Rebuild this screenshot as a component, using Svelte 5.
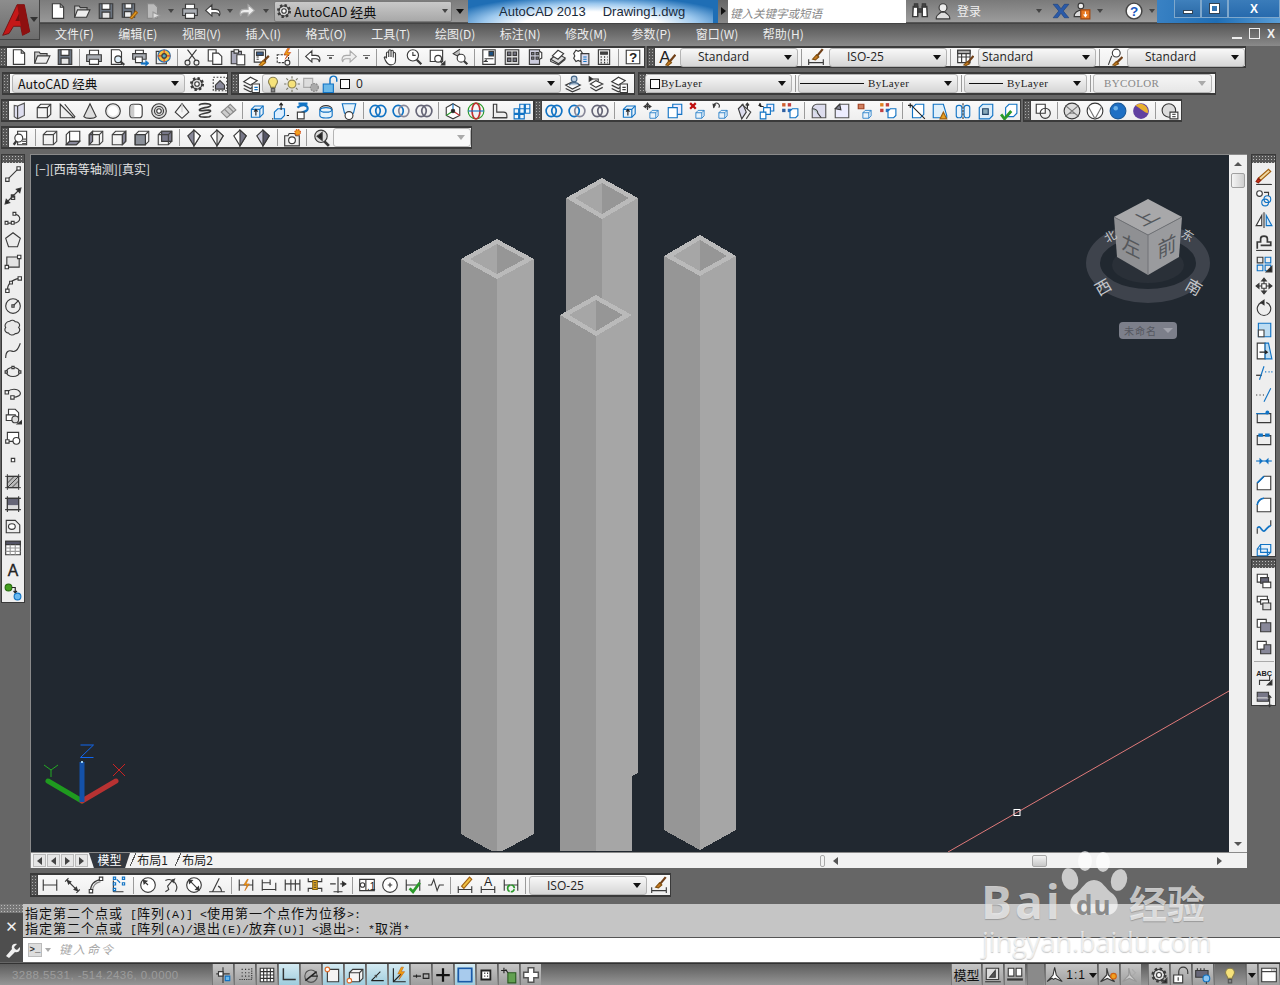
<script lang="ts">
	const B = '#1173c4';
	const cube = (c = B) =>
		`<path d="M3 6.5l3-3h7.5v7l-3 3h-7.5z" fill="#eaf3fa" stroke="${c}"/><path d="M3 6.5h7.5v7M10.5 6.5l3-3" stroke="${c}"/>`;
	const dcube = (x = '') => `<g transform="translate(4 5) scale(.7)">${cube()}</g>${x}`;
	const rings = (a = B, b = B) =>
		`<ellipse cx="5.5" cy="8" rx="4.5" ry="5" stroke="${a}" stroke-width="1.5"/><ellipse cx="10.5" cy="8" rx="4.5" ry="5" stroke="${b}" stroke-width="1.5"/>`;
	const wire = (f = 'none') =>
		`<path d="M2 5l3-3h9v9l-3 3H2z" fill="${f}" stroke="#444"/><path d="M2 5h9v9M11 5l3-3" stroke="#444"/>`;
	const diamond = (l = '#fff', r = '#fff') =>
		`<path d="M8 1l5.5 5-5.5 9-5.5-9z" fill="${l}"/><path d="M8 1v14l5.5-9z" fill="${r}"/>`;
	const dim = (x = '') => `<path d="M2 3v10M14 3v10M2 8h12" />${x}`;

	const icons: Record<string, string> = {
		new: `<path d="M3 1.5h7l3 3v10H3z" fill="#fff"/><path d="M10 1.5v3h3"/>`,
		open: `<path d="M1.5 13.5v-10h4l1 1.5h6v2" fill="#ccc"/><path d="M1.5 13.5l2.5-6.5h11l-3 6.5z" fill="#eee"/>`,
		save: `<path d="M2 1.5h12v13H2z" fill="#6b7480"/><path d="M4.5 1.5h7v5h-7z" fill="#fff"/><path d="M4.5 9h7v5.5h-7z" fill="#e6e6e6"/>`,
		saveas: `<path d="M2 1.5h11v12H2z" fill="#6b7480"/><path d="M4.5 1.5h6v4h-6z" fill="#fff"/><path d="M4 8.5h6v5H4z" fill="#eee"/><path d="M9 14l5-6 1.5 1.5-5 5.5z" fill="#e8a020" stroke="#a06010"/>`,
		publish: `<path d="M3 1.5h6l3 3v10H3z" fill="#bbb" stroke="#888"/><path d="M8 9l6 3-6 3z" fill="#ddd" stroke="#999"/>`,
		print: `<path d="M4 6V2h8v4" fill="#fff"/><path d="M1.5 6h13v6h-13z" fill="#a9adb3"/><path d="M4 10h8v4.5H4z" fill="#fff"/>`,
		preview: `<path d="M3 1.5h7l2 2v11H3z" fill="#fff"/><circle cx="9" cy="10" r="3" fill="#dfeffa"/><path d="M11 12l3.5 3" stroke-width="2"/>`,
		plot: `<path d="M4 5V2h7v3" fill="#fff"/><path d="M1.5 5h12v5h-12z" fill="#a9adb3"/><path d="M4 8h6v5H4z" fill="#fff"/><path d="M9 13h4V11l3 2.5L13 16v-1.5H9z" fill="${B}" stroke="${B}" stroke-width=".5"/>`,
		view3d: `<path d="M2 3h9v11H2z" fill="#eee"/><circle cx="9" cy="7" r="5.5" fill="#f2c040" stroke="#2a70b0"/><path d="M9 1.5v11M3.5 7h11" stroke="#d04030"/><circle cx="9" cy="7" r="2" fill="#5ab"/>`,
		cut: `<path d="M4 1.5l7 9M12 1.5l-7 9"/><circle cx="4" cy="13" r="2.2"/><circle cx="12" cy="13" r="2.2"/>`,
		copy: `<path d="M2 1.5h7v10H2z" fill="#fff"/><path d="M6 4.5h5l3 3v7H6z" fill="#fff"/>`,
		paste: `<path d="M2 3h9v11H2z" fill="#aab"/><path d="M4.5 1.5h4v3h-4z" fill="#eee"/><path d="M7 6h7v9H7z" fill="#fff"/>`,
		match: `<path d="M2 1.5h10v11H2z" fill="#fff"/><path d="M4 3.5h6v3H4z" fill="#3a5f90"/><path d="M4 8h2M4 10h2"/><path d="M15 7l-5 5" stroke="#704018" stroke-width="2"/><path d="M10 11l2 2-3 2.5-2.5-.5z" fill="#e8a020" stroke="#a06010"/>`,
		block: `<path d="M2 6h10v7H2z" fill="#fff" stroke-dasharray="2 1"/><path d="M11 .5L8 6h3l-2 4 5-6h-3l2-3.5z" fill="#f0a010" stroke="#c03010" stroke-width=".5"/><circle cx="11" cy="13" r="2.2" fill="#fff"/>`,
		undo: `<path d="M7 2.5L1.5 7.5 7 12.5V9.5h3.5c2 0 3 1.2 3 3 1.5-3 .5-6-3-6H7z" fill="#fff"/>`,
		redo: `<path d="M9 2.5l5.5 5L9 12.5V9.5H5.5c-2 0-3 1.2-3 3-1.5-3-.5-6 3-6H9z" fill="#eee" stroke="#aaa"/>`,
		pan: `<path d="M4 9V4.5a1 1 0 0 1 2 0V8V2.5a1 1 0 0 1 2 0V8V3a1 1 0 0 1 2 0v5.5V5a1 1 0 0 1 2 0v6c0 2.5-2 4-4 4-2.5 0-3.5-1-5-4L2 8.5c.5-1 1.5-.5 2 .5z" fill="#fff"/>`,
		zoom: `<circle cx="7" cy="6.5" r="5" fill="#fff"/><path d="M7 3.5v3h2.5"/><path d="M10.5 10.5l4 4" stroke-width="2"/>`,
		zoomw: `<path d="M2 2h11v10H2z" fill="#fff"/><circle cx="9" cy="9.5" r="3" fill="#fff"/><path d="M11 12l2 2"/><path d="M12 15h3v-3z" fill="#222"/>`,
		zoomp: `<path d="M8 1L2 5l3.5 2 2.5-2" fill="#bbb"/><circle cx="9" cy="9" r="3.5" fill="#fff"/><path d="M11.5 11.5l3 3" stroke-width="2"/>`,
		prop: `<path d="M2.5 1.5h11v13h-11z" fill="#fff"/><path d="M8 3h4v4H8z" fill="#1a4f80"/><path d="M4 9.5h8M7 12H4l2-1.5"/>`,
		dc: `<path d="M2 1.5h12v13H2z" fill="#ddd"/><path d="M4 3.5h3v3H4zM9 3.5h3v3H9zM4 9h3v3H4zM9 9h3v3H9z" fill="#778"/>`,
		tp: `<path d="M3 1.5h9v13H3z" fill="#ccd"/><path d="M5 4h2v2H5zM9 4h2v2H9zM5 8h2v2H5zM9 8h2v2H9z" fill="#889"/><path d="M12 3l2 1v5l-2 1" fill="#fff"/>`,
		sheet: `<path d="M1.5 10l6-5 7 4-6 5z" fill="#ddd"/><path d="M3 7l5-5 5 3-5 5z" fill="#fff"/><path d="M1.5 10v2l7 3 6-5"/>`,
		markup: `<path d="M1.5 5l2-3 2 1 2-1 2 3-1 2 1 2-2 3-2-1-2 1-2-3 1-2z" fill="#fff"/><path d="M8 5h7v10H8z" fill="#dde"/><path d="M10 8h3M10 10h3M10 12h3" stroke="${B}"/>`,
		calc: `<path d="M3 1.5h10v13H3z" fill="#eee"/><path d="M5 3.5h6v2H5z" fill="#444"/><path d="M5 8h1M8 8h1M11 8h.5M5 10.5h1M8 10.5h1M11 10.5h.5M5 13h1M8 13h1M11 13h.5" stroke-width="1.5"/>`,
		help: `<path d="M2 2h12v12H2z" fill="#fff"/><text x="8" y="12" text-anchor="middle" font-size="12" font-weight="700" font-family="Liberation Sans" fill="#222" stroke="none">?</text>`,
		tstyle: `<text x="1" y="13" font-size="15" font-family="Liberation Sans" fill="#222" stroke="none">A</text><path d="M15.5 6l-5 6" stroke="#704018" stroke-width="2"/><path d="M10 11l2 2-3 2.5-2-.5z" fill="#c87a20" stroke="#805010"/>`,
		dstyle: `<path d="M1.5 10v5M14.5 10v5M1.5 13h13"/><path d="M14 1l-5 6" stroke="#704018" stroke-width="2"/><path d="M8.5 6l2 2-3 2.5-2.5-.5z" fill="#c87a20" stroke="#805010"/>`,
		tbstyle: `<path d="M1.5 2h11v11h-11z" fill="#fff"/><path d="M1.5 2h11v3h-11z" fill="#aaa"/><path d="M1.5 8h11M5 5v8M9 5v8"/><path d="M15.5 7l-5 6" stroke="#704018" stroke-width="2"/><path d="M10 12l2 2-3 1.5-2-.5z" fill="#c87a20" stroke="#805010"/>`,
		mstyle: `<path d="M3 15l3-8"/><circle cx="10" cy="4.5" r="3.5" fill="#fff"/><path d="M15.5 8l-5 5" stroke="#704018" stroke-width="2"/><path d="M10 12l2 2-3 1.5-2-.5z" fill="#c87a20" stroke="#805010"/>`,
		gear: `<circle cx="8" cy="8" r="5" fill="#ddd" stroke-width="2.5" stroke-dasharray="2 1.9"/><circle cx="8" cy="8" r="4.5" /><circle cx="8" cy="8" r="2" fill="#fff"/>`,
		wsave: `<path d="M2 2h12v12H2z" stroke-dasharray="1.5 1.5"/><path d="M4 9l4-4 4 4v3.5H4z" fill="#889"/>`,
		layer: `<path d="M1.5 6l6-4 6 3-6 4z" fill="#fff"/><path d="M1.5 9l6 3 2-1M1.5 12l6 3 2-1"/><path d="M9 8h6.5v7.5H9z" fill="#fff"/><path d="M11 11h3M11 13h3" stroke="${B}"/>`,
		lmatch: `<path d="M1.5 9l6-3 7 3-7 3.5z" fill="#fff"/><path d="M1.5 12l6 3 7-3"/><circle cx="9" cy="3.5" r="2.5" fill="#bcd" stroke="#468"/><path d="M5 9c0-3 8-3 8 0" fill="#bcd" stroke="#468"/>`,
		lprev: `<path d="M3 8l5-3 6 3-6 3z" fill="#fff"/><path d="M3 11l5 3 6-3"/><path d="M2 1.5l3 2-3 2z" fill="#222"/><path d="M5 3.5h5v2"/>`,
		lstate: `<path d="M1.5 6l6-4 6 3-6 4z" fill="#fff"/><path d="M1.5 9l6 3 2-1M1.5 12l6 3 2-1"/><path d="M9 8h6.5v7.5H9z" fill="#fff"/><path d="M11 11h3M11 13h3"/>`,
		poly: `<path d="M5 3.5l6-2.5v11L5 15l-3-2V3z" fill="#dde" stroke="#555"/><path d="M5 3.5V15"/>`,
		box: `<path d="M2 5l3-3h9v9l-3 3H2z" fill="#f4f4f4"/><path d="M2 5h9v9" /><path d="M11 5l3-3" />`,
		wedge: `<path d="M2 2l12 12H2z" fill="#eee"/><path d="M6 2l9 11-1 1" />`,
		cone: `<path d="M8 1.5L2.5 13c2 2 9 2 11 0z" fill="#ddd"/>`,
		sphere: `<circle cx="8" cy="8" r="6.5" fill="#e8e8e8"/><circle cx="8" cy="8" r="4.5" fill="#fff" stroke="none"/>`,
		cyl: `<rect x="2.5" y="2" width="11" height="12" rx="3" fill="#fff"/><path d="M5 2.5v11" stroke="#ccc" stroke-width="3"/>`,
		torus: `<circle cx="8" cy="8" r="6.5" fill="#ddd"/><circle cx="8" cy="8" r="4"/><circle cx="8" cy="8" r="2" fill="#fff"/>`,
		pyr: `<path d="M8 1.5L14 9l-6 5.5L2 9z" fill="#f4f4f4"/><path d="M8 1.5V9" stroke="#ccc"/>`,
		helix: `<path d="M3 3c0-2 10-2 10 0s-10 2-10 4 10-1 10 1-10 2-10 4 10 2 10 0" stroke-width="1.5"/>`,
		planar: `<path d="M2 9l8-7 5 5-8 7z" fill="#ccc" stroke="#888"/><path d="M5 6.5l5 5M8 4l5 5" stroke="#888"/>`,
		extrude: `${cube()}<path d="M7 12V7M5.5 8.5L7 6.5l1.5 2" stroke="#222"/>`,
		press: `<path d="M3 9l3-3h6v6l-3 3H3z" fill="#dceeff" stroke="${B}"/><path d="M9 7V1.5M7.5 3L9 1l1.5 2M14 12h2M2 15h-1" stroke="#222"/>`,
		sweep: `<path d="M4 1.5h8M3 5c5-4 10-2 9 1.5-1 3-7 2-7 5" stroke="${B}" stroke-width="2"/><path d="M3 9h6v6H3z" fill="#fff"/>`,
		revolve: `<path d="M2.5 7c0-5 11-5 11 0" stroke="#333"/><path d="M2.5 7v5c0 3 11 3 11 0V7" fill="#e6f3fb" stroke="${B}"/><ellipse cx="8" cy="7" rx="5" ry="2" stroke="${B}"/>`,
		loft: `<path d="M2 1.5h12L12 10H4z" fill="#e6f3fb" stroke="${B}"/><circle cx="8" cy="12" r="3.5" fill="#fff"/>`,
		union: rings(),
		subtract: rings(B, '#889'),
		intersect: rings('#667', '#667'),
		gizmo: `<path d="M8 1.5l6 3.5v7l-6 3-6-3V5z" fill="#fff"/><path d="M8 8V1.5" stroke="${B}"/><path d="M8 8l-6 4" stroke="#2a9a2a"/><path d="M8 8l6 4" stroke="#c03030"/><circle cx="8" cy="8" r="1.5" fill="#222"/>`,
		orbit: `<circle cx="8" cy="8" r="7" stroke="#2a9a2a"/><ellipse cx="8" cy="8" rx="3.5" ry="7" stroke="#c03030" stroke-width="1.5"/><path d="M1 8h14" stroke="${B}"/>`,
		shell: `<path d="M3 2h3v7h6c2 0 3 1 3 3v2H3z" fill="#eee"/><path d="M2 14h13"/>`,
		array3: `<path d="M6 2h4v4H6zM11 2h4v4h-4zM6 6h4v4H6zM11 6h4v4h-4zM1 6h4v4H1zM1 11h4v4H1zM6 11h4v4H6z" stroke="${B}" fill="#eef6fc"/>`,
		move3: dcube(`<path d="M4 1v6M1 4h6M4 1L3 2.5h2zM1 4l1.5-1v2zM7 4L5.5 3v2z" fill="#222"/>`),
		copy3: `<path d="M6 2h8v9H6z" fill="#eef" stroke="${B}"/><path d="M2 5h8v9H2z" fill="#fff" stroke="${B}"/>`,
		del3: dcube(`<path d="M1 1l5 5M6 1L1 6" stroke="#c01010" stroke-width="2"/>`),
		rot3: dcube(`<path d="M2 5a2.5 2.5 0 1 1 4 0" /><path d="M1 2l2 .5-1.5 2z" fill="#222"/>`),
		offs3: `<path d="M2 6l4-4 3 7-4 6z" fill="#dde" transform="translate(1 0)"/><path d="M6 2l8 7-4 6" stroke="#444"/><path d="M11 1v5" stroke="#222"/><path d="M9.5 3L11 1l1.5 2" fill="#222"/>`,
		stack3: `<path d="M8 2h6v6H8z" fill="#eef" stroke="${B}"/><path d="M5 5h6v6H5z" fill="#fff" stroke="${B}"/><path d="M2 1v3h3M2 1L1 3h2" stroke="#222"/><path d="M2 9h5v6H2z" fill="#fff" stroke="${B}"/>`,
		dots3: `<path d="M1 1h3v3H1z" fill="#d06030" stroke="none"/><path d="M6 1h3v3H6z" fill="#c04040" stroke="none"/><path d="M1 6h3v3H1z" fill="#3060a0" stroke="none"/><path d="M6 6h3v3H6z" fill="#3070c0" stroke="none"/><path d="M8 8l2-2h5v6l-2 2H8z" fill="#fff" stroke="${B}"/>`,
		fillet3: `<path d="M2 14V6c0-2 2-4 4-4h8v12z" fill="#dde" stroke="#555"/><path d="M2 6c2 0 5 1 5 4l3 4" fill="#bcc"/>`,
		cham3: `<path d="M6 2h8v12H2V6z" fill="#eef" stroke="#555"/><path d="M6 2l1 5-5-1z" fill="#889"/>`,
		rect3: dcube(`<path d="M2 2h5v4H2z" fill="#d08060" stroke="#a04020"/>`),
		dots4: `<path d="M1 1h3v3H1z" fill="#e08020" stroke="none"/><path d="M1 6h3v3H1z" fill="#c04040" stroke="none"/><path d="M6 1h3v3H6z" fill="#c04040" stroke="none"/><path d="M6 6h3v3H6z" fill="#3070c0" stroke="none"/><path d="M8 8l2-2h5v6l-2 2H8z" fill="#fff" stroke="${B}"/>`,
		slice: `<path d="M4 5l3-3h7v9l-3 3H4z" fill="#fff" stroke="${B}"/><path d="M3 3l12 12" stroke="#222"/><path d="M2 1v4M0 3h4" stroke="#222"/>`,
		clash: `<path d="M2 14V2h9l3 10v2z" fill="#e0f0fa" stroke="${B}"/><path d="M11 9l-3 6h6z" fill="#e8a020" stroke="#a06010"/>`,
		sep3: `<rect x="2" y="3" width="5" height="11" rx="2" fill="#eaf3fa" stroke="${B}"/><rect x="9" y="3" width="5" height="11" rx="2" fill="#eaf3fa" stroke="${B}"/><path d="M8 1v14" stroke-dasharray="2 1"/>`,
		shell3: `<path d="M2 5l3-3h9v10l-3 3H2z" fill="#ddeefa" stroke="${B}"/><path d="M5 6h5v5H5z" fill="#8ab" stroke="#246"/>`,
		check3: `<path d="M5 5l3-3h7v8l-3 3H5z" fill="#fff" stroke="${B}"/><path d="M1 11l3 4 6-7" stroke="#2a9a2a" stroke-width="2.5"/>`,
		flat: `<path d="M2 2h8v8H2z" fill="#fff"/><circle cx="10" cy="10" r="4.5" fill="none"/>`,
		sph1: `<circle cx="8" cy="8" r="7" fill="#ddd"/><path d="M2 3l12 10M14 3L2 13M3 12c3-3 7-3 10 0" stroke="#777"/>`,
		sph2: `<circle cx="8" cy="8" r="7" fill="#fff"/><path d="M2 4l6 11 6-11" stroke="#777"/>`,
		sph3: `<circle cx="8" cy="8" r="7" fill="#1d6fc4" stroke="#1a5a9a"/><circle cx="6" cy="5.5" r="2" fill="#6ab0e8" stroke="none"/>`,
		sph4: `<circle cx="8" cy="8" r="7" fill="#6040a0" stroke="none"/><path d="M3 3a7 7 0 0 1 11 7c-3-1-6-4-11-7z" fill="#e8b030" stroke="none"/>`,
		vstyle: `<circle cx="7" cy="7.5" r="6" fill="#ddd"/><path d="M8 9h7v6H8z" fill="#fff"/><path d="M10 11h3M10 13h3" stroke="#555"/>`,
		mlook: `<path d="M5 2h8v12H5z" fill="#fff"/><circle cx="6" cy="8" r="3.5" fill="#fff"/><path d="M4 10.5L1.5 14" stroke-width="2"/><path d="M9 11h4M9 13h4M9 9h4" stroke="#555"/>`,
		w1: wire(), w2: `<path d="M2 5l3-3h9v9l-3 3H2z" fill="#fff"/><path d="M2 14l3-3h9M5 2v9" /><path d="M2 14l3-3h9l-3 3z" fill="#889"/>`,
		w3: `<path d="M2 5l3-3v9l-3 3z" fill="#889"/>${wire()}`,
		w4: `<path d="M11 5l3-3v9l-3 3z" fill="#889"/>${wire()}`,
		w5: `<path d="M2 5h9v9H2z" fill="#889"/>${wire()}<path d="M2 5h9v9H2z" fill="#8a8f98"/>`,
		w6: `<path d="M5 2h9v9H5z" fill="#778"/>${wire()}`,
		d1: diamond('#889', '#fff'),
		d2: diamond('#fff', '#ddd'),
		d3: diamond('#fff', '#778'),
		d4: diamond('#ccd', '#556'),
		cam: `<path d="M1.5 6h3l1-2h5l1 2h3v9h-13z" fill="#eee"/><circle cx="8" cy="10" r="3" fill="#fff"/><circle cx="13" cy="3" r="2.5" fill="#f0a020" stroke="#d04010" stroke-dasharray="1 1"/>`,
		seek: `<circle cx="8" cy="6.5" r="5.5" fill="#ddd"/><path d="M11 11l4 4" stroke-width="2.5"/><path d="M9 3L4.5 6.5 9 10z" fill="#222"/>`,
		line: `<path d="M3 13L13 3"/><path d="M1.5 11.5h3v3h-3zM11.5 1.5h3v3h-3z" fill="#fff"/>`,
		xline: `<path d="M2 14L14 2" /><path d="M1 15l4-1-3-3zM15 1l-4 1 3 3z" fill="#222"/><path d="M6.5 8h3v3h-3zM6.5 7h2v2h-2z" fill="#fff"/>`,
		pline: `<path d="M2 12.5h7c3 0 5-2 5-4s-2-4-5-4" /><path d="M1 11h2.5v2.5H1zM6.5 11H9v2.5H6.5zM8 3h2.5v2.5H8z" fill="#fff"/>`,
		pgon: `<path d="M8 1.5l6.5 5-2.5 7.5H4L1.5 6.5z" fill="#ececec"/>`,
		rect: `<path d="M2.5 3.5h11v9h-11z" fill="#e4e4e4"/><path d="M1 11h3v3H1zM12 2h3v3h-3z" fill="#fff"/>`,
		arc: `<path d="M3 14c0-6 4-10 11-11"/><path d="M1.5 12.5h3v3h-3zM12.5 1.5h3v3h-3zM5 5.5h2.5V8H5z" fill="#fff"/>`,
		circ: `<circle cx="8" cy="8" r="6.5" fill="#eee"/><path d="M8 8l5-5"/><path d="M7 7h2v2H7z" fill="#fff"/>`,
		cloud: `<path d="M5 2c2-1.5 4-1 5 .5 3-.5 5 3 3 5 2 2 .5 6-3 5.5-2 2-5 1.5-6-.5-3 0-4-3-2.5-5-1.5-2 .5-5.5 3.5-5.5z" fill="#e8e8e8"/>`,
		spline: `<path d="M1.5 15c0-6 3-7 5.5-6s5 0 7.5-7"/>`,
		ell: `<ellipse cx="8" cy="8" rx="6" ry="4" fill="#eee"/><path d="M1 7h2v2H1zM13 7h2v2h-2zM7 3h2v2H7z" fill="#fff"/>`,
		earc: `<path d="M3 6c3-3 9-3 11 0s-2 5-6 5"/><path d="M1 5h3v3H1zM6 9.5h3v3H6z" fill="#fff"/>`,
		binsert: `<path d="M4 2h6l3 3v5H4z" fill="#fff"/><path d="M2 7h8v5H2z" fill="#fff"/><circle cx="10" cy="11" r="3" fill="#ddd"/><path d="M12 15h4v-3z" fill="#222"/>`,
		bmake: `<path d="M3 3h10v8H3z" fill="#fff"/><circle cx="11" cy="10.5" r="3" fill="#fff"/><path d="M1.5 9.5h3v3h-3z" fill="#fff"/>`,
		point: `<path d="M6.5 6.5h3v3h-3z" fill="#fff"/>`,
		hatch: `<path d="M3 3h10v10H3z" fill="#bbb"/><path d="M1 3h14M1 13h14M3 1v14M13 1v14M3 9l6-6M3 13L13 3M7 13l6-6" stroke-width=".8"/>`,
		grad: `<path d="M3 3h10v10H3z" fill="#667"/><path d="M3 9h10v4H3z" fill="#ddd" stroke="none"/><path d="M1 3h14M1 13h14M3 1v14M13 1v14"/>`,
		region: `<path d="M2 3h8l4 4v7H2z" fill="#eee"/><ellipse cx="7" cy="8.5" rx="3" ry="2.5" fill="#fff"/>`,
		table: `<path d="M1.5 2h13v12h-13z" fill="#fff"/><path d="M1.5 2h13v3h-13z" fill="#556"/><path d="M1.5 8h13M1.5 11h13M5.5 5v9M10 5v9" stroke="#999"/>`,
		mtext: `<text x="8" y="13" text-anchor="middle" font-size="14" font-family="Liberation Sans" fill="#222" stroke="#222" stroke-width=".3">A</text>`,
		addsel: `<circle cx="4" cy="4" r="3" fill="#44a020" stroke="#2a7010"/><path d="M7 4h3v5M8.5 7l1.5 2 1.5-2" stroke="#222"/><circle cx="12" cy="12" r="3" fill="#6ab8f0" stroke="${B}"/>`,
		erase: `<path d="M3 10l9-8 2 2-9 8z" fill="#f0d8a0" stroke="#a06010"/><path d="M3 10l2 2-2 2-2-1z" fill="#d03010" stroke="#902010"/><path d="M1 15.5h14"/>`,
		mcopy: `<circle cx="4" cy="4" r="2.5" fill="#fff"/><circle cx="11" cy="9" r="3" stroke="${B}"/><circle cx="9" cy="12" r="3" stroke="${B}"/><path d="M8 3h4v3"/>`,
		mirror: `<path d="M8 1v14" /><path d="M6 4v9H1z" fill="#fff"/><path d="M10 4v9h5z" fill="#cfe6f8" stroke="${B}"/>`,
		offset: `<path d="M2 14V8h3V5c0-3 6-3 6 0v3h3v3H5" stroke-width="1.5"/><path d="M1 15.5h14"/>`,
		array: `<path d="M2 2h5v5H2z"/><path d="M9 2h5v5H9zM2 9h5v5H2zM9 9h5v5H9z" stroke="${B}"/><path d="M15 15h-5l5-5z" fill="#222"/>`,
		move: `<path d="M8 1v14M1 8h14M8 1L6 3.5h4zM8 15l-2-2.5h4zM1 8l2.5-2v4zM15 8l-2.5-2v4z" fill="#222"/><path d="M6 6h4v4H6z" fill="#fff"/>`,
		rotate: `<path d="M6 3a6 6 0 1 0 4 0"/><path d="M8 1L5 3l3 2z" fill="#222"/>`,
		scale: `<path d="M3 2h11v12H3z" fill="#bcdcf2" stroke="${B}"/><path d="M3 8h5v6H3z" fill="#fff" stroke="#444"/>`,
		stretch: `<path d="M2 1h7v14H2z" fill="#fff"/><path d="M9 1h3l3 14H9z" fill="#bcdcf2" stroke="${B}"/><path d="M4 9h7M9 7.5L11 9l-2 1.5" stroke="#222"/>`,
		trim: `<path d="M1 10h5" stroke="#222"/><path d="M4 14l4-12" stroke="${B}"/><path d="M9 7l1 0M12 7h1M14.5 7h1" stroke="${B}"/>`,
		extend: `<path d="M1 8h1M4 8h1M7 8h1" stroke="#333"/><path d="M8 14l6-12" stroke="${B}"/>`,
		bpoint: `<path d="M2 5h12v8H2z" fill="#eee"/><path d="M1 5h10" stroke="${B}"/><circle cx="11" cy="4" r="1.7" fill="${B}" stroke="none"/>`,
		bline: `<path d="M2 5h12v8H2z" fill="#eee"/><path d="M3 3h4v3H3zM9 3h4v3H9z" fill="${B}" stroke="none"/>`,
		join: `<path d="M1 8h14" stroke="${B}"/><path d="M4 5v6l3-3zM12 5v6L9 8z" fill="${B}" stroke="none"/>`,
		cham: `<path d="M8 2h6v12H2V8z" fill="#fff"/><path d="M8 2L2 8" stroke="${B}" stroke-width="1.5"/>`,
		fillet: `<path d="M8 2h6v12H2V8c0-3 3-6 6-6z" fill="#fff"/><path d="M2 8c0-3 3-6 6-6" stroke="${B}" stroke-width="1.5"/>`,
		blend: `<path d="M2 9v5M14 2v5"/><path d="M2 9c3-4 4 5 7 2s3-4 5-4" stroke="${B}" stroke-width="1.5"/>`,
		explode: `<path d="M2 8l3-4h9v7l-3 3H2z" stroke="${B}" fill="#e8f2fa"/><path d="M2 8h9v6M5 4v7h9" stroke="${B}"/>`,
		draw1: `<path d="M2 2h9v7H2z" fill="#fff"/><path d="M5 5h7v5H5z" fill="#667"/><path d="M7 9h7v5H7z" fill="#fff"/>`,
		draw2: `<path d="M2 2h9v5H2z" fill="#fff"/><path d="M5 5h7v4H5z" fill="#fff"/><path d="M7 8h7v6H7z" fill="#ddd"/>`,
		draw3: `<path d="M2 3h8v7H2z" fill="#fff"/><path d="M5 6h9v8H5z" fill="#889"/>`,
		draw4: `<path d="M2 3h8v7H2z" fill="#fff"/><path d="M8 6h6v8H5v-4h3z" fill="#889"/>`,
		abc: `<text x="1" y="7" font-size="6.5" font-family="Liberation Sans" font-weight="700" fill="#222" stroke="none">ABC</text><path d="M13 7v4H4v4"/><path d="M15 15h-4l4-4z" fill="#222"/>`,
		hmark: `<path d="M2 2h10v8H2z" fill="#778"/><path d="M2 7h10" stroke="#ddd"/><path d="M13 5v10M11.5 7L13 5l1.5 2M11.5 13l1.5 2 1.5-2M4 14h7" />`,
		dlin: dim(), dal: `<path d="M1 5l3-3M11 15l3-3M3 4l9 9"/><path d="M3 4l3 1-2 2zM12 13l-3-1 2-2z" fill="#222"/>`,
		darc: `<path d="M3 14c0-6 3-10 10-11"/><path d="M5 13c0-4 3-7 7-8" stroke="#888"/><path d="M2 12h3v3H2zM11 1h3v3h-3z" fill="#fff"/>`,
		dord: `<path d="M3 14h9M3 14V4" stroke="#333"/><path d="M6 3l3 3M3 1h2v2H3zM3 6h2v2H3zM3 11h2v2H3zM11 1h2v2h-2zM11 6h2v2h-2z" stroke="${B}"/>`,
		drad: `<circle cx="8" cy="8" r="6.5" fill="#fff"/><path d="M8 8L4 4M4 4l3 .5L4.5 7z" fill="#222"/>`,
		djog: `<path d="M3 4a7 7 0 0 1 9 10"/><path d="M3 14l3-2-1-3 5-6"/><path d="M11 3l-2 1 1 1.5z" fill="#222"/>`,
		ddia: `<circle cx="8" cy="8" r="6.5" fill="#fff"/><path d="M3.5 3.5l9 9"/><path d="M3.5 3.5l3 .5-2.5 2.5zM12.5 12.5l-3-.5 2.5-2.5z" fill="#222"/>`,
		dang: `<path d="M1 14h14M4 14L10 2"/><path d="M12 14c0-3-1-4-3-5"/>`,
		dqk: `${dim()}<path d="M9 3L6 8h3l-2 5 4-6H8l2-4z" fill="#f0a010" stroke="#c06010" stroke-width=".5"/>`,
		dbase: `<path d="M2 3v10M9 3v5M14 6v7M2 6h7M2 12h12"/>`,
		dcont: `<path d="M2 3v10M7 3v10M11 3v10M15 3v10M2 7h13"/>`,
		dsp: `<path d="M2 2v3h12V2M2 14v-3h12v3"/><path d="M6 4h4v8H6z" fill="#f0b020" stroke="#806010"/><path d="M7 6h2M7 8h2M7 10h2"/>`,
		dbrk: `<path d="M8 1v14M1 7h5M10 7h5M4 14h8"/><path d="M12 5l3 2-3 2z" fill="#222"/>`,
		tol: `<path d="M1.5 3h13v10h-13z" fill="#fff"/><path d="M7 3v10"/><circle cx="4" cy="8" r="2"/><text x="8" y="12" font-size="9" font-family="Liberation Sans" fill="#222" stroke="none">.1</text>`,
		cmark: `<circle cx="8" cy="8" r="6.5" fill="#fff"/><path d="M6 8h4M8 6v4"/>`,
		dins: `${dim()}<path d="M5 11l3 3 6-8" stroke="#2a9a2a" stroke-width="2.5"/>`,
		djogl: `<path d="M1 8h3l2-5 3 10 2-5h4"/>`,
		dedit: `<path d="M2 9v6M14 9v6M2 12h12"/><path d="M5 9l7-8 2 2-7 8z" fill="#f0c040" stroke="#a06010"/>`,
		dtxt: `<path d="M2 9v6M14 9v6M2 12h12"/><text x="8" y="9" text-anchor="middle" font-size="11" font-family="Liberation Sans" fill="#222" stroke="none">A</text>`,
		dupd: `${dim()}<path d="M5 11a3 3 0 1 1 6 0 3 3 0 1 1-6 0" stroke="#2a9a2a" stroke-width="1.5" stroke-dasharray="4 1"/>`,
		bino: `<path d="M2 4h4v9H1.5zM10 4h4l.5 9H10z" fill="#fff" stroke-width="1.3"/><path d="M6 6h4v3H6zM3 1.5h3v3H3zM10 1.5h3v3h-3z" fill="#444"/>`,
		user: `<circle cx="8" cy="5" r="3.5" fill="#eee"/><path d="M2 15v-1c0-3 3-3 4-5h4c1 2 4 2 4 5v1z" fill="#ddd"/>`,
		xchange: `<path d="M1 2h4l3 4 3-4h4l-5 6 5 6h-4l-3-4-3 4H1l5-6z" fill="#2a5aa8" stroke="#163a78" stroke-width=".5"/>`,
		dl: `<circle cx="7" cy="3.5" r="2.5" fill="#eee"/><path d="M1 13c0-4 3-5 6-6v6z" fill="#ddd"/><path d="M7 7h8v8H7z" fill="#e87820" stroke="#a04810"/><path d="M11 8.5v4M9.5 11l1.5 2 1.5-2" stroke="#fff"/>`,
		hlp: `<circle cx="8" cy="8" r="7" fill="#fff" stroke="#444" stroke-width="1.3"/><text x="8" y="12.5" text-anchor="middle" font-size="12" font-weight="700" font-family="Liberation Sans" fill="#1a5ac0" stroke="none">?</text>`,
		bulb: `<path d="M4 6a4 4 0 1 1 8 0c0 2-2 3-2 5H6c0-2-2-3-2-5z" fill="#f6e27a" stroke="#8a8050"/><path d="M6.5 12h3v3h-3z" fill="#888" stroke="#555"/>`,
		sun: `<circle cx="8" cy="8" r="3.5" fill="#f6e27a" stroke="#8a8050"/><path d="M8 1v2M8 13v2M1 8h2M13 8h2M3 3l1.5 1.5M13 3l-1.5 1.5M3 13l1.5-1.5M13 13l-1.5-1.5" stroke="#776"/>`,
		frz: `<path d="M1.5 3h8v8h-8z" fill="#ddd" stroke="#aaa"/><circle cx="11" cy="11" r="3.5" fill="#aaa" stroke="#888" stroke-dasharray="1.5 1"/>`,
		lock: `<path d="M2 8h9v7.5H2z" fill="#6ab8e8" stroke="${B}"/><path d="M8 8V4a3 3 0 0 1 6 0v2" stroke="${B}" stroke-width="1.3"/>`,
		snap: `<path d="M8 1v14M2 7h12"/><path d="M4 5h4v4H4z" fill="#fff"/><path d="M10 9h4v4h-4z" fill="#6ab8e8" stroke="${B}"/>`,
		sgrip: `<path d="M14 2v10M3 12h11" stroke="#333" stroke-dasharray="1 1"/><path d="M5 3h1M8 3h1M11 3h1M5 6h1M8 6h1M11 6h1M5 9h1M8 9h1M11 9h1" stroke="#333"/>`,
		grid: `<path d="M2 2h12v12H2z" fill="#fff"/><path d="M2 5h12M2 8h12M2 11h12M5 2v12M8 2v12M11 2v12" stroke="#333"/>`,
		ortho: `<path d="M3 2v10h11M3 12h6" stroke="#333" stroke-width="1.3"/>`,
		polar: `<circle cx="8" cy="9" r="5.5" stroke="#555"/><path d="M3 13L13 5M8 9h6" stroke="#222" stroke-width="1.3"/>`,
		osnap: `<path d="M3 3h10v11H3z" fill="#f4f4f4"/><circle cx="3" cy="3" r="2" fill="#fff" stroke="#e07030"/>`,
		osnap3: `<path d="M3 6l3-3h9v8l-3 3H3z" fill="#f4f4f4"/><path d="M3 6h9v8M12 6l3-3" /><circle cx="3" cy="13" r="2" fill="#fff" stroke="#e07030"/>`,
		otrack: `<path d="M3 13L11 5M3 13h11" stroke="#222"/><path d="M6 8l2 2" stroke="#555"/>`,
		dyn: `<path d="M3 2v12h11" stroke="#222"/><path d="M3 14L11 6" stroke="#222"/><path d="M10 1L7 7h3L8 12l5-7h-3l2-4z" fill="#f0a010" stroke="#c06010" stroke-width=".5"/>`,
		lwt: `<path d="M1 9h7M4 7.5v3M10 7h5v4h-5z" stroke="#222"/>`,
		plus: `<path d="M8 2v12M2 8h12" stroke="#111" stroke-width="2"/>`,
		trans: `<path d="M2 2h12v12H2z" fill="#7aace0" stroke="#1a5aa8" stroke-width="1.5"/><path d="M3 3h10v10H3z" fill="#bcd8f2" stroke="none" opacity=".7"/>`,
		qp: `<path d="M3 4h8v8H3z" fill="#fff" stroke="#222" stroke-width="1.6"/><path d="M5.5 6.5h1M8 6.5h1M5.5 9h1M8 9h1" stroke-width="1.3"/>`,
		sc: `<path d="M1 4h5M3.5 1.5v5" stroke="#222"/><path d="M7 6h7v9H7z" fill="#62a050" stroke="#2a5a20"/><path d="M5 3l2 3" stroke="#222"/>`,
		cross: `<path d="M5.5 1.5h5v4h4v5h-4v4h-5v-4h-4v-5h4z" fill="#fff" stroke="#555" stroke-width="1.3"/>`,
		stm: `<path d="M2 2h11v10H2z" fill="#ddd"/><path d="M5 10l5-6v6z" fill="#555"/><path d="M1 14h14"/>`,
		stl: `<path d="M2 2h5v7H2zM9 2h5v7H9z" fill="#fff"/><path d="M1 12h14" stroke-width="2"/>`,
		anno: `<path d="M8 1l1.5 7 5.5 6-6.5-3-1.5 1-1.5-1L1 14l5.5-6z" fill="#fff" stroke="#333"/>`,
		anno1: `<path d="M6 2l1.5 6 5.5 6-6.5-3-6 3 5.5-6z" fill="#fff"/><circle cx="12" cy="9" r="2.5" fill="#f0a020" stroke="#d06010"/>`,
		anno2: `<path d="M6 2l1.5 6 5.5 6-6.5-3-6 3 5.5-6z" fill="#ccc" stroke="#999"/><path d="M9 3l3 3-3 3" stroke="#aaa"/>`,
		cogs: `<circle cx="8" cy="8" r="5.5" fill="#ddd" stroke-width="2.5" stroke-dasharray="2.2 2.1"/><circle cx="8" cy="8" r="5"/><circle cx="8" cy="8" r="2.2" fill="#fff"/><path d="M15 15h-4l4-4z" fill="#222"/>`,
		lk: `<path d="M1.5 8h8v7h-8z" fill="#fff"/><path d="M6 8V5a3.5 3.5 0 0 1 8 0v2"/><path d="M5.5 10v3"/>`,
		hw: `<path d="M1.5 4h11v6h-11z" fill="#667"/><path d="M3 2v2M6 2v2M9 2v2" /><circle cx="11" cy="11" r="3" fill="#8cc4f0" stroke="${B}"/><path d="M11 14v2"/>`,
		win: `<path d="M1.5 2h13v12h-13z" fill="#fff"/><path d="M1.5 5h13"/><path d="M10 3.5h1M12 3.5h1" />`
	};

	const row1a = ['new','open','save','|','print','preview','plot','view3d','|','cut','copy','paste','match','block','|','undo','v','redo','v','|','pan','zoom','zoomw','zoomp','|','prop','dc','tp','sheet','markup','calc','|','help'];
	const row3a = ['poly','box','wedge','cone','sphere','cyl','torus','pyr','helix','planar','|','extrude','press','sweep','revolve','loft','|','union','subtract','intersect','|','gizmo','orbit','shell','array3'];
	const row3b = ['union','subtract','intersect','|','extrude','move3','copy3','del3','rot3','offs3','stack3','dots3','|','fillet3','cham3','rect3','dots4','|','slice','clash','sep3','shell3','check3'];
	const row3c = ['flat','|','sph1','sph2','sph3','sph4','|','vstyle'];
	const row4 = ['mlook','|','w1','w2','w3','w4','w5','w6','|','d1','d2','d3','d4','|','cam','|','seek'];
	const leftTools = ['line','xline','pline','pgon','rect','arc','circ','cloud','spline','ell','earc','binsert','bmake','point','hatch','grad','region','table','mtext','addsel'];
	const rightTools = ['erase','mcopy','mirror','offset','array','move','rotate','scale','stretch','trim','extend','bpoint','bline','join','cham','fillet','blend','explode'];
	const dimTools = ['dlin','dal','darc','dord','|','drad','djog','ddia','dang','|','dqk','dbase','dcont','dsp','dbrk','|','tol','cmark','dins','djogl','|','dedit','dtxt','dupd','|'];
	const menus = ['文件(F)','编辑(E)','视图(V)','插入(I)','格式(O)','工具(T)','绘图(D)','标注(N)','修改(M)','参数(P)','窗口(W)','帮助(H)'];
	const statusLeft = [['snap',0],['sgrip',0],['grid',0],['ortho',1],['polar',0],['osnap',1],['osnap3',1],['otrack',1],['dyn',1],['lwt',0],['plus',0],['trans',1],['qp',0],['sc',0],['cross',0]] as [string, number][];

	const pillars = [
		{ l: 566, c: 602, r: 638, top: 178, mid: 198, front: 219, side: 773, bot: 793 },
		{ l: 461, c: 497, r: 534, top: 239, mid: 259, front: 279, side: 834, bot: 854 },
		{ l: 664, c: 700, r: 736, top: 235, mid: 256, front: 276, side: 830, bot: 850 },
		{ l: 560, c: 596, r: 632, top: 295, mid: 315, front: 336, side: 880, bot: 900 }
	];
</script>

{#snippet icon(name: string)}
	<svg class="ic" viewBox="0 0 16 16" fill="none" stroke="#3a3a3a" stroke-width="1">{@html icons[name]}</svg>
{/snippet}

{#snippet tool(item: string)}
	{#if item === '|'}
		<i class="sep"></i>
	{:else if item === 'v'}
		<i class="dd"></i>
	{:else}
		<span class="btn">{@render icon(item)}</span>
	{/if}
{/snippet}

{#snippet combo(label: string, cls = '')}
	<span class="combo {cls}"><span class="combo-text">{label}</span><i class="tri"></i></span>
{/snippet}

<div class="page">
	<header class="top">
		<div class="logo">
			<svg viewBox="0 0 40 40" width="36" height="38">
				<path d="M3 37L19 3h8l6 30-8 4-2-10h-8l-5 8z" fill="#c41818" stroke="#701010"/>
				<path d="M19 3h8l6 30-8 4z" fill="#8e1010"/>
				<path d="M17 21h5l-1-8z" fill="#701010"/>
			</svg>
			<i class="tri logo-tri"></i>
		</div>
		<div class="titlebar">
			<div class="qat">
				<span class="q">{@render icon('new')}</span>
				<span class="q">{@render icon('open')}</span>
				<span class="q">{@render icon('save')}</span>
				<span class="q">{@render icon('saveas')}</span>
				<span class="q">{@render icon('publish')}</span>
				<i class="qdd"></i>
				<span class="q">{@render icon('print')}</span>
				<span class="q">{@render icon('undo')}</span>
				<i class="qdd nar"></i>
				<span class="q">{@render icon('redo')}</span>
				<i class="qdd"></i>
				<span class="wscombo">{@render icon('gear')}<b>AutoCAD 经典</b><i class="qdd"></i></span>
				<i class="tri qmore"></i>
			</div>
			<div class="aero">
				<span class="app">AutoCAD 2013</span>
				<span>Drawing1.dwg</span>
			</div>
			<i class="tri-right"></i>
			<div class="search">键入关键字或短语</div>
			<div class="infocenter">
				<span class="q">{@render icon('bino')}</span>
				<span class="q">{@render icon('user')}</span>
				<span class="login">登录</span>
				<i class="qdd far"></i>
				<span class="q xc">{@render icon('xchange')}</span>
				<span class="q">{@render icon('dl')}</span>
				<i class="qdd"></i>
				<span class="q hp">{@render icon('hlp')}</span>
				<i class="qdd"></i>
			</div>
			<div class="winbtns">
				<span class="wb min"><i></i></span>
				<span class="wb max"><i></i></span>
				<span class="wb close">X</span>
			</div>
		</div>
		<nav class="menubar">
			<div class="menus">
				{#each menus as m}<span>{m}</span>{/each}
			</div>
			<div class="mdi">
				<i class="m-min"></i><i class="m-res"></i><span>X</span>
			</div>
		</nav>
	</header>

	<div class="tbrow r1">
		<div class="panel pa">
			<i class="grip"></i>
			{#each row1a as t}{@render tool(t)}{/each}
		</div>
		<div class="panel pb">
			<i class="grip"></i>
			{@render tool('tstyle')}{@render combo('Standard')}{@render tool('|')}
			{@render tool('dstyle')}{@render combo('ISO-25')}{@render tool('|')}
			{@render tool('tbstyle')}{@render combo('Standard', 'near')}{@render tool('|')}
			{@render tool('mstyle')}{@render combo('Standard')}
		</div>
	</div>

	<div class="tbrow r2">
		<div class="panel w1">
			<i class="grip"></i>
			<span class="combo ws"><span class="combo-text">AutoCAD 经典</span><i class="tri"></i></span>
			{@render tool('gear')}{@render tool('wsave')}
		</div>
		<div class="panel w2">
			<i class="grip"></i>
			{@render tool('layer')}
			<span class="combo lay">
				{@render icon('bulb')}{@render icon('sun')}{@render icon('frz')}{@render icon('lock')}
				<i class="swatch"></i>
				<span class="combo-text zero">0</span><i class="tri"></i>
			</span>
			{@render tool('lmatch')}{@render tool('lprev')}{@render tool('lstate')}
		</div>
		<div class="panel w3">
			<i class="grip"></i>
			<span class="combo bl color"><i class="swatch"></i><span class="combo-text">ByLayer</span><i class="tri"></i></span>
			{@render tool('|')}
			<span class="combo bl ltype"><i class="lt"></i><span class="combo-text">ByLayer</span><i class="tri"></i></span>
			{@render tool('|')}
			<span class="combo bl lweight"><i class="lt"></i><span class="combo-text">ByLayer</span><i class="tri"></i></span>
			{@render tool('|')}
			<span class="combo bl bycolor"><span class="combo-text">BYCOLOR</span><i class="tri"></i></span>
		</div>
	</div>

	<div class="tbrow r3">
		<div class="panel">
			<i class="grip"></i>
			{#each row3a as t}{@render tool(t)}{/each}
		</div>
		<div class="panel">
			<i class="grip"></i>
			{#each row3b as t}{@render tool(t)}{/each}
		</div>
		<div class="panel third">
			<i class="grip"></i>
			{#each row3c as t}{@render tool(t)}{/each}
		</div>
	</div>

	<div class="tbrow r4">
		<div class="panel">
			<i class="grip"></i>
			{#each row4 as t}{@render tool(t)}{/each}
			<span class="combo blank"><i class="tri off"></i></span>
		</div>
	</div>

	<main class="work">
		<aside class="vbar leftbar">
			<i class="vgrip"></i>
			{#each leftTools as t}<span class="vbtn">{@render icon(t)}</span>{/each}
		</aside>

		<section class="viewport">
			<div class="view-main">
				<div class="canvas">
					<svg class="draw" viewBox="31 155 1198 697" width="1198" height="697">
						<g shape-rendering="crispEdges">
							{#each pillars as p}
								<polygon points="{p.l},{p.mid} {p.c},{p.front} {p.c},{p.bot} {p.l},{p.side}" fill="#969696" />
								<polygon points="{p.c},{p.front} {p.r},{p.mid} {p.r},{p.side} {p.c},{p.bot}" fill="#a6a6a6" />
								<polygon points="{p.l},{p.mid} {p.c},{p.top} {p.r},{p.mid} {p.c},{p.front}" fill="#bababa" />
								<polygon points="{p.l + 9},{p.mid} {p.c},{p.top + 5} {p.c},{p.front - 5}" fill="#a6a6a6" />
								<polygon points="{p.c},{p.top + 5} {p.r - 9},{p.mid} {p.c},{p.front - 5}" fill="#969696" />
							{/each}
							<rect x="31" y="851" width="1198" height="1" fill="#212830" />
						</g>

						<line x1="948" y1="852" x2="1229" y2="691" stroke="#e07a7a" />
						<rect x="1014" y="809.5" width="6" height="6" fill="none" stroke="#fff" />

						<!-- ucs icon -->
						<g fill="none">
							<path d="M80.5 745h13l-13 12.5h13" stroke="#1166ee" />
							<path d="M44 765l7 5 7-5M51 770v7" stroke="#22aa22" />
							<path d="M113 764l12 12M125 764l-12 12" stroke="#cc2222" />
							<path d="M82 801L48 781" stroke="#1f9a1f" stroke-width="5" stroke-linecap="round" />
							<path d="M82 801l34-20" stroke="#b83232" stroke-width="5" stroke-linecap="round" />
							<path d="M82 802V762" stroke="#1451a8" stroke-width="5" />
							<path d="M81 761h2v2h-2z" fill="#9cd0f0" />
						</g>

						<!-- view cube -->
						<g>
							<path fill-rule="evenodd" d="M1086 263a62 40 0 1 0 124 0a62 40 0 1 0-124 0zM1100 263a48 26 0 1 0 96 0a48 26 0 1 0-96 0z" fill="#3e434c" />
							<ellipse cx="1148" cy="265" rx="36" ry="18" fill="#2a3038" />
							<polygon points="1148,199 1182,217 1148,235 1114,217" fill="#a8a8aa" />
							<polygon points="1114,217 1148,235 1148,275 1117,257" fill="#8f9093" />
							<polygon points="1182,217 1148,235 1148,275 1179,257" fill="#9a9b9e" />
							<path d="M1114 217L1148 235L1182 217M1148 235V275" stroke="#707276" fill="none" />
							<text class="cube" transform="matrix(1 -.5 1 .5 1152 222)" font-size="19">上</text>
							<text class="cube" transform="matrix(.9 .45 0 1 1131 254)" font-size="21">左</text>
							<text class="cube" transform="matrix(.9 -.45 0 1 1167 254)" font-size="21">前</text>
							<text class="compass" transform="rotate(-30 1110 236)" x="1110" y="241">北</text>
							<text class="compass" transform="rotate(30 1188 235)" x="1188" y="240">东</text>
							<text class="compass big" transform="rotate(-30 1103 287)" x="1103" y="293">西</text>
							<text class="compass big" transform="rotate(30 1194 287)" x="1194" y="293">南</text>
						</g>
					</svg>
					<div class="vlabel">[−][西南等轴测][真实]</div>
					<div class="wcs">未命名<i></i></div>
				</div>
				<div class="vscroll">
					<i class="up"></i>
					<i class="vthumb"></i>
					<i class="down"></i>
				</div>
			</div>
			<div class="hbar">
				<div class="nav">
					<i class="n first"></i><i class="n prev"></i><i class="n next"></i><i class="n last"></i>
				</div>
				<span class="tab active">模型</span>
				<span class="tab">布局1</span>
				<span class="tab">布局2</span>
				<i class="split"></i>
				<i class="h-left"></i>
				<div class="track"><i class="hthumb"></i></div>
				<i class="h-right"></i>
			</div>
		</section>

		<div class="rightcol">
			<aside class="vbar rightbar">
				<i class="vgrip"></i>
				{#each rightTools as t}<span class="vbtn">{@render icon(t)}</span>{/each}
			</aside>
			<aside class="vbar rightbar second">
				<i class="vgrip"></i>
				<span class="vbtn">{@render icon('draw1')}</span>
				<span class="vbtn">{@render icon('draw2')}</span>
				<span class="vbtn">{@render icon('draw3')}</span>
				<span class="vbtn">{@render icon('draw4')}</span>
				<i class="hsep"></i>
				<span class="vbtn">{@render icon('abc')}</span>
				<span class="vbtn">{@render icon('hmark')}</span>
			</aside>
		</div>
	</main>

	<div class="tbrow r5">
		<div class="panel">
			<i class="grip"></i>
			{#each dimTools as t}{@render tool(t)}{/each}
			{@render combo('ISO-25')}
			{@render tool('dstyle')}
		</div>
	</div>

	<section class="cmd">
		<div class="cmd-side">
			<i class="vgrip"></i>
			<span class="cmd-x">✕</span>
			<svg class="wrench" viewBox="0 0 16 16" width="16" height="16">
				<path d="M2 14l6-7c-1-3 1-6 5-5l-3 3 1 2 2 1 3-3c.5 4-2 6-5 5l-6 6z" fill="#f0f0f0" />
			</svg>
		</div>
		<div class="cmd-body">
			<div class="history">
				<p><span class="h">指定第二个点或</span> [<span class="h">阵列</span>(A)] &lt;<span class="h">使用第一个点作为位移</span>&gt;:</p>
				<p><span class="h">指定第二个点或</span> [<span class="h">阵列</span>(A)/<span class="h">退出</span>(E)/<span class="h">放弃</span>(U)] &lt;<span class="h">退出</span>&gt;: *<span class="h">取消</span>*</p>
			</div>
			<div class="prompt">
				<span class="chip">&gt;_</span><i class="chip-dd"></i>
				<em>键入命令</em>
			</div>
		</div>
	</section>

	<footer class="status">
		<span class="coords">3288.5531, -514.2436, 0.0000</span>
		<div class="sbtns">
			{#each statusLeft as [n, on]}
				<span class="sb" class:on={on === 1}>{@render icon(n)}</span>
			{/each}
		</div>
		<div class="sright">
			<span class="sb txt">模型</span>
			<span class="sb">{@render icon('stm')}</span>
			<span class="sb">{@render icon('stl')}</span>
			<span class="sb blank"></span>
			<span class="sb anno">{@render icon('anno')}<b>1:1</b><i class="tri"></i></span>
			<span class="sb">{@render icon('anno1')}</span>
			<span class="sb">{@render icon('anno2')}</span>
			<i class="gap"></i>
			<span class="sb">{@render icon('cogs')}</span>
			<span class="sb">{@render icon('lk')}</span>
			<span class="sb">{@render icon('hw')}</span>
			<span class="sb lamp">{@render icon('bulb')}</span>
			<span class="sb tiny"><i class="tri"></i></span>
			<span class="sb">{@render icon('win')}</span>
		</div>
	</footer>

	<div class="watermark" aria-hidden="true">
		<span class="wm-bai">Bai</span>
		<svg class="paw" viewBox="0 0 70 68" width="70" height="68">
			<ellipse cx="10" cy="29" rx="8" ry="11" transform="rotate(-15 10 29)" />
			<ellipse cx="25" cy="11" rx="7" ry="10" />
			<ellipse cx="43" cy="12" rx="7" ry="10" />
			<ellipse cx="59" cy="30" rx="8" ry="11" transform="rotate(15 59 30)" />
			<path d="M34 30c-9 0-11 9-19 14-8 6-6 21 8 21 5 0 7-2 11-2s6 2 12 2c13 0 15-14 7-21-8-5-10-14-19-14z" />
		</svg>
		<span class="wm-du">du</span>
		<span class="wm-cn">经验</span>
		<span class="wm-url">jingyan.baidu.com</span>
	</div>
</div>

<style>
	:global(body) {
		margin: 0;
		background: #666;
	}

	.page {
		position: relative;
		width: 1280px;
		height: 985px;
		overflow: hidden;
		background: #666;
		font-family: "Noto Sans CJK SC", "Liberation Sans", sans-serif;
		font-size: 12px;
		color: #111;
	}

	i {
		display: block;
		font-style: normal;
	}

	.ic {
		display: block;
		width: 18px;
		height: 18px;
	}

	/* title bar + menu */
	.top {
		display: grid;
		grid-template-columns: 40px 1fr;
		grid-template-rows: 23px 23px;
		height: 46px;
	}

	.logo {
		grid-row: 1 / 3;
		height: 40px;
		display: flex;
		background: linear-gradient(#8d8d8d, #6d6d6d);
		border-right: 1px solid #444;
		border-bottom: 1px solid #444;
		box-sizing: border-box;
		align-items: center;
	}

	.tri {
		width: 0;
		height: 0;
		border-left: 4px solid transparent;
		border-right: 4px solid transparent;
		border-top: 5px solid #111;
		flex: none;
	}

	.tri.off {
		border-top-color: #aaa;
	}

	.logo-tri {
		margin-left: -6px;
		border-top-color: #333;
	}

	.titlebar {
		display: flex;
		align-items: stretch;
		height: 23px;
		background: #1f6eb5;
	}

	.qat {
		display: flex;
		align-items: center;
		width: 428px;
		flex: none;
		padding-left: 6.5px;
		box-sizing: border-box;
		background: linear-gradient(#7c7c7c, #989898);
		border-bottom: 1px solid #555;
	}

	.q {
		display: flex;
		justify-content: center;
		width: 23px;
		flex: none;
	}

	.qat .q {
		width: 23.7px;
	}

	.qdd {
		width: 0;
		height: 0;
		margin: 0 3.5px;
		border-left: 3px solid transparent;
		border-right: 3px solid transparent;
		border-top: 4px solid #444;
		flex: none;
	}

	.nar {
		margin: 0 2px;
	}

	.far {
		margin-left: 53px;
	}

	.wscombo {
		display: flex;
		align-items: center;
		gap: 1px;
		width: 178px;
		height: 21px;
		margin-left: 2px;
		background: linear-gradient(#c9c9c9, #a8a8a8);
		border: 1px solid #7a7a7a;
		box-sizing: border-box;
		border-radius: 2px;
		flex: none;
	}

	.wscombo b {
		flex: 1;
		font-weight: 400;
		font-size: 13px;
		color: #111;
		white-space: nowrap;
	}

	.qmore {
		margin-left: 4px;
	}

	.aero {
		width: 245px;
		flex: none;
		display: flex;
		align-items: center;
		gap: 17px;
		padding-left: 31px;
		box-sizing: border-box;
		color: #1a2a3a;
		font-family: "Liberation Sans", sans-serif;
		font-size: 13px;
		background: radial-gradient(ellipse 150px 30px at 50% 110%, #fff 45%, #9cc8ee 72%, #1f6eb5 100%);
	}

	.tri-right {
		width: 15px;
		flex: none;
		background: linear-gradient(#666, #888);
		position: relative;
		border-left: 5px solid #1f6eb5;
		box-sizing: border-box;
	}

	.tri-right::after {
		content: "";
		position: absolute;
		left: 3px;
		top: 7px;
		border-left: 5px solid #111;
		border-top: 4px solid transparent;
		border-bottom: 4px solid transparent;
	}

	.search {
		width: 178px;
		flex: none;
		box-sizing: border-box;
		background: #fff;
		color: #888;
		font-style: italic;
		padding-left: 2px;
		line-height: 27px;
		height: 23px;
		overflow: hidden;
		font-size: 11.5px;
	}

	.infocenter {
		width: 251px;
		flex: none;
		display: flex;
		align-items: center;
		background: linear-gradient(#7a7a7a, #9c9c9c);
		border-bottom: 1px solid #555;
		box-sizing: border-box;
		padding-left: 2px;
	}

	.login {
		margin-left: 3px;
		color: #f0f0f0;
		font-size: 12px;
		line-height: 16px;
		width: 26px;
		flex: none;
	}

	.xc {
		margin-left: 5px;
		width: 20px;
	}

	.hp {
		margin-left: 16px;
	}

	.winbtns {
		flex: 1;
		display: flex;
		justify-content: flex-end;
		background: linear-gradient(100deg, #3a82c4, #1f6eb5 50%, #5a9ed8);
	}

	.wb {
		height: 18px;
		width: 27px;
		display: flex;
		align-items: center;
		justify-content: center;
		background: linear-gradient(#3f80bc, #2a69a6);
		border: 1px solid #7fa8cc;
		border-top: 0;
		box-sizing: border-box;
		color: #fff;
		font-weight: 700;
		font-family: "Liberation Sans", sans-serif;
		font-size: 12px;
	}

	.wb.close {
		width: 52px;
		background: linear-gradient(#3a7cba, #276aad);
	}

	.min i {
		width: 10px;
		height: 4px;
		background: #fff;
		border: 1px solid #345;
		margin-top: 6px;
		box-sizing: border-box;
	}

	.max i {
		width: 9px;
		height: 9px;
		border: 2px solid #fff;
		box-sizing: border-box;
		outline: 1px solid #345;
	}

	.menubar {
		display: flex;
		justify-content: space-between;
		align-items: center;
		background: linear-gradient(#565656, #8a8a8a);
		border-top: 1px solid #444;
		box-sizing: border-box;
		height: 23px;
		padding-bottom: 3px;
	}

	.menus {
		display: flex;
		gap: 24.5px;
		padding-left: 15px;
		color: #ececec;
		font-size: 12px;
		line-height: 18px;
	}

	.mdi {
		display: flex;
		align-items: center;
		gap: 7px;
		padding-right: 5px;
		color: #f0f0f0;
		font-weight: 700;
		font-family: "Liberation Sans", sans-serif;
	}

	.m-min {
		width: 10px;
		height: 2px;
		margin-top: 8px;
		background: #eee;
	}

	.m-res {
		width: 11px;
		height: 11px;
		border: 1px solid #eee;
		box-sizing: border-box;
	}

	/* toolbars */
	.tbrow {
		display: flex;
		height: 23px;
	}

	.r1 {
		gap: 2px;
		height: 22px;
	}

	.r2 {
		margin-top: 4px;
		padding-left: 2px;
		gap: 3px;
	}

	.r3 {
		margin-top: 4px;
		padding-left: 1px;
	}

	.third {
		margin-left: 2px;
	}

	.r4 {
		margin-top: 4px;
		padding-left: 1px;
	}

	.r5 {
		margin-top: 5px;
		padding-left: 30px;
		height: 24px;
	}

	.panel {
		display: flex;
		align-items: center;
		background: linear-gradient(#fafafa, #eeeeee);
		border: solid #3a3a3a;
		border-width: 2px 1px;
		box-sizing: border-box;
		height: 100%;
		flex: none;
	}

	.grip {
		width: 7px;
		align-self: stretch;
		background: #555 radial-gradient(circle, #aaa 0.8px, transparent 1px) 0 0 / 3px 3px;
		border-right: 1px solid #444;
		box-sizing: border-box;
		flex: none;
	}

	.btn {
		display: flex;
		align-items: center;
		justify-content: center;
		width: 23px;
		flex: none;
	}

	.sep {
		width: 1px;
		height: 17px;
		margin: 0 2.5px;
		background: #9a9a9a;
		flex: none;
	}

	.dd {
		width: 13px;
		flex: none;
		height: 4px;
		background: linear-gradient(#666, #666) center top / 7px 1px no-repeat, linear-gradient(#666, #666) center 2px / 3px 2px no-repeat;
	}

	.combo {
		display: flex;
		align-items: center;
		box-sizing: border-box;
		width: 118px;
		height: 19px;
		padding: 0 5px 0 6px;
		flex: none;
		background: linear-gradient(#f8f8f8, #d6d6d6);
		border: 1px solid #b4b4b4;
		border-radius: 3px;
		font-family: "Open Sans", "Noto Sans CJK SC", sans-serif;
		font-size: 12px;
		color: #222;
	}

	.combo-text {
		flex: 1;
		margin-left: 11px;
		text-align: left;
		white-space: nowrap;
		line-height: 15px;
	}

	.combo.near .combo-text {
		margin-left: -3px;
	}

	.pa {
		width: 645px;
		border-left: 0;
	}

	.pb {
		width: 599px;
	}

	.pb .combo {
		margin-left: 2px;
	}

	.pb .combo-text {
		margin-top: -1px;
	}

	.r5 .combo {
		margin-left: 1px;
	}

	.ws {
		width: 173px;
		margin: 0 0 0 2px;
	}

	.ws .combo-text {
		margin-left: -1px;
		font-size: 12.5px;
		color: #111;
		font-family: "Noto Sans CJK SC", sans-serif;
	}

	.w1 {
		width: 226px;
	}

	.w2 {
		width: 404px;
	}

	.w3 {
		width: 578px;
	}

	.lay {
		width: 299px;
		padding-left: 1px;
		gap: 0;
	}

	.lay .ic {
		width: 18px;
		height: 18px;
		margin-right: 1px;
		flex: none;
	}

	.swatch {
		width: 10px;
		height: 10px;
		background: #fff;
		border: 1px solid #111;
		box-sizing: border-box;
		flex: none;
	}

	.lay .zero {
		margin-left: 6px;
	}

	.bl {
		font-family: "Liberation Serif", serif;
		font-size: 11px;
		letter-spacing: 0.4px;
	}

	.color {
		width: 147px;
		margin-left: -1px;
		padding-left: 4px;
	}

	.bl .combo-text {
		margin-left: 4px;
	}

	.color .combo-text {
		margin-left: 1px;
	}

	.ltype {
		width: 160px;
		padding-left: 1px;
	}

	.lweight {
		width: 123px;
		padding-left: 4px;
	}

	.lt {
		height: 1px;
		background: #111;
		width: 64px;
		flex: none;
	}

	.lweight .lt {
		width: 34px;
	}

	.bycolor {
		width: 119px;
		color: #888;
		background: linear-gradient(#f6f6f6, #e6e6e6);
	}

	.bycolor .tri {
		border-top-color: #aaa;
	}

	.blank {
		width: 138px;
		justify-content: flex-end;
		background: #f8f8f8;
		margin-left: 1px;
	}

	/* work area */
	.work {
		display: flex;
		margin-top: 5px;
		height: 714px;
	}

	.vbar {
		display: flex;
		flex-direction: column;
		align-items: center;
		box-sizing: border-box;
		width: 24px;
		background: #eeeeee;
		border: 1px solid #3a3a3a;
		flex: none;
	}

	.leftbar {
		margin-left: 1px;
		height: 449px;
	}

	.vgrip {
		align-self: stretch;
		height: 8px;
		flex: none;
		background: #555 radial-gradient(circle, #bbb 0.8px, transparent 1px) 0 0 / 3px 3px;
	}

	.vbtn {
		display: flex;
		justify-content: center;
		align-items: center;
		height: 22px;
		flex: none;
	}

	.viewport {
		margin-left: 5px;
		width: 1217px;
		flex: none;
		border-left: 1px solid #8a8a8a;
		border-top: 1px solid #8a8a8a;
		box-sizing: border-box;
		height: 714px;
		display: flex;
		flex-direction: column;
	}

	.view-main {
		display: flex;
		height: 697px;
		flex: none;
	}

	.canvas {
		position: relative;
		width: 1198px;
		background: #212830;
		overflow: hidden;
		flex: none;
	}

	.draw {
		display: block;
	}

	.cube {
		fill: #55585c;
		text-anchor: middle;
		font-family: "Noto Sans CJK SC", sans-serif;
	}

	.compass {
		fill: #c4c6ca;
		font-size: 12px;
		text-anchor: middle;
		font-family: "Noto Sans CJK SC", sans-serif;
	}

	.compass.big {
		font-size: 16px;
	}

	.vlabel {
		position: absolute;
		left: 4px;
		top: 5px;
		color: #e4e4e4;
		font-size: 12px;
		white-space: nowrap;
	}

	.wcs {
		position: absolute;
		left: 1088px;
		top: 167px;
		width: 58px;
		height: 17px;
		box-sizing: border-box;
		display: flex;
		align-items: center;
		gap: 6px;
		padding-left: 5px;
		border-radius: 4px;
		background: #7c7f8a;
		color: #55575f;
		font-size: 10px;
		letter-spacing: 1px;
		white-space: nowrap;
	}

	.wcs i {
		border-left: 5px solid transparent;
		border-right: 5px solid transparent;
		border-top: 5px solid #a0a2ab;
	}

	.vscroll {
		width: 18px;
		flex: none;
		background: #f0f0f0;
		display: flex;
		flex-direction: column;
		align-items: center;
	}

	.up {
		margin-top: 7px;
		border-left: 4px solid transparent;
		border-right: 4px solid transparent;
		border-bottom: 4px solid #555;
	}

	.vthumb {
		width: 14px;
		height: 15px;
		margin-top: 7px;
		background: linear-gradient(90deg, #f4f4f4, #cfcfcf);
		border: 1px solid #a0a0a0;
		border-radius: 2px;
		box-sizing: border-box;
	}

	.down {
		margin-top: auto;
		margin-bottom: 6px;
		border-left: 4px solid transparent;
		border-right: 4px solid transparent;
		border-top: 4px solid #555;
	}

	.hbar {
		display: flex;
		align-items: center;
		height: 16px;
		background: #f2f2f2;
		border-top: 1px solid #8a8a8a;
		box-sizing: border-box;
		flex: none;
		padding-left: 2px;
		width: 1216px;
	}

	.nav {
		display: flex;
		gap: 1px;
		width: 56px;
		flex: none;
	}

	.n {
		width: 13px;
		height: 13px;
		position: relative;
		background: #e6e6e6;
		border: 1px solid #bbb;
		box-sizing: border-box;
	}

	.n::after {
		content: "";
		position: absolute;
		left: 3px;
		top: 2px;
		border-top: 4px solid transparent;
		border-bottom: 4px solid transparent;
	}

	.first::after,
	.prev::after {
		border-right: 5px solid #444;
	}

	.next::after,
	.last::after {
		border-left: 5px solid #444;
	}

	.tab {
		width: 45px;
		flex: none;
		height: 15px;
		line-height: 14px;
		text-align: center;
		font-size: 12px;
		color: #222;
		background: linear-gradient(115deg, transparent 5px, #555 5px, #555 6px, transparent 6px) left / 8px 100% no-repeat;
	}

	.tab.active {
		width: 41px;
		color: #fff;
		background: #33383f;
		clip-path: polygon(0 0, 100% 0, 88% 100%, 12% 100%);
	}

	.split {
		width: 5px;
		height: 12px;
		margin-left: 600px;
		flex: none;
		border: 1px solid #aaa;
		box-sizing: border-box;
		border-radius: 2px;
	}

	.h-left {
		margin-left: 8px;
		border-top: 4px solid transparent;
		border-bottom: 4px solid transparent;
		border-right: 5px solid #555;
		flex: none;
	}

	.track {
		flex: 1;
		display: flex;
		padding-left: 194px;
	}

	.hthumb {
		width: 15px;
		height: 12px;
		background: linear-gradient(#f2f2f2, #c8c8c8);
		border: 1px solid #a8a8a8;
		border-radius: 2px;
		box-sizing: border-box;
	}

	.h-right {
		margin-right: 25px;
		border-top: 4px solid transparent;
		border-bottom: 4px solid transparent;
		border-left: 5px solid #555;
		flex: none;
	}

	.rightcol {
		margin-left: 4px;
		display: flex;
		flex-direction: column;
		gap: 2px;
		width: 25px;
		flex: none;
	}

	.rightbar {
		width: 25px;
		height: 403px;
	}

	.rightbar .vbtn {
		height: 21.95px;
	}

	.rightbar .vgrip {
		margin-bottom: 2px;
	}

	.second {
		height: 147px;
	}

	.hsep {
		width: 20px;
		height: 1px;
		margin: 3px 0 4px;
		background: #aaa;
		flex: none;
	}

	/* command line */
	.cmd {
		display: flex;
		margin-top: 7px;
		height: 58px;
	}

	.cmd-side {
		width: 23px;
		flex: none;
		background: #4e4e4e;
		color: #f0f0f0;
		display: flex;
		flex-direction: column;
		align-items: center;
	}

	.cmd-side .vgrip {
		height: 9px;
		background-color: #777;
	}

	.cmd-x {
		margin-top: 3px;
		font-weight: 700;
		font-size: 15px;
		line-height: 22px;
		font-family: "DejaVu Sans", sans-serif;
	}

	.wrench {
		margin-top: 4px;
	}

	.cmd-body {
		flex: 1;
		display: flex;
		flex-direction: column;
	}

	.history {
		height: 34px;
		padding: 1px 0 0 2px;
		box-sizing: border-box;
		background: #c5c5c5;
		border-bottom: 1px solid #555;
		font-family: "Liberation Mono", monospace;
		font-size: 11.67px;
		color: #111;
	}

	.history p {
		margin: 0;
		height: 15px;
		line-height: 15px;
		white-space: pre;
	}

	.h {
		display: inline-block;
		height: 15px;
		line-height: 15px;
		font-family: "Noto Sans CJK SC", sans-serif;
		font-size: 13px;
		letter-spacing: 1px;
	}

	.prompt {
		flex: 1;
		background: #fff;
		display: flex;
		align-items: center;
		padding-left: 5px;
	}

	.chip {
		width: 14px;
		height: 14px;
		line-height: 13px;
		text-align: center;
		font-size: 9px;
		font-family: "Liberation Mono", monospace;
		font-weight: 700;
		background: #ddd;
		border: 1px solid #bbb;
		box-sizing: border-box;
		color: #333;
	}

	.chip-dd {
		margin-left: 3px;
		border-left: 3px solid transparent;
		border-right: 3px solid transparent;
		border-top: 4px solid #aaa;
	}

	.prompt em {
		margin-left: 8px;
		margin-top: -3px;
		font-style: italic;
		color: #a8a8a8;
		letter-spacing: 2px;
		font-size: 12px;
		line-height: 16px;
	}

	/* status bar */
	.status {
		display: flex;
		align-items: stretch;
		height: 23px;
		margin-top: 1px;
		background: linear-gradient(#5c5c5c, #999);
		border-top: 1px solid #333;
		box-sizing: border-box;
	}

	.coords {
		width: 212px;
		flex: none;
		box-sizing: border-box;
		padding-left: 12px;
		line-height: 22px;
		color: #9c9c9c;
		font-family: "Liberation Sans", sans-serif;
		font-size: 11.5px;
		letter-spacing: 0.45px;
		white-space: pre;
		overflow: hidden;
	}

	.sbtns {
		display: flex;
		width: 329px;
		flex: none;
	}

	.sb {
		width: 21px;
		margin-right: 1px;
		flex: none;
		display: flex;
		align-items: center;
		justify-content: center;
		background: linear-gradient(#c6c6c6, #9c9c9c);
		border-left: 1px solid #777;
		box-sizing: border-box;
	}

	.sb.on {
		background: linear-gradient(#d4eaf2, #9ccbdc);
	}

	.sright {
		display: flex;
		margin-left: 410px;
		flex: none;
	}

	.txt {
		width: 30px;
		color: #111;
		font-size: 13px;
		line-height: 18px;
	}

	.sb.blank {
		width: 17px;
		background: #8a8a8a;
	}

	.anno {
		width: 52px;
		gap: 3px;
	}

	.anno b {
		font-weight: 400;
		font-family: "Liberation Sans", sans-serif;
		letter-spacing: 1px;
	}

	.gap {
		width: 6px;
		flex: none;
	}

	.lamp {
		width: 31px;
		background: linear-gradient(#666, #999);
	}

	.tiny {
		width: 11px;
	}

	.watermark {
		position: absolute;
		left: 0;
		top: 0;
		width: 1280px;
		height: 985px;
		pointer-events: none;
		color: rgba(255, 255, 255, 0.66);
		font-family: "Open Sans", sans-serif;
		text-shadow: 0 1px 1px rgba(0, 0, 0, 0.22);
	}

	.watermark span {
		position: absolute;
		white-space: nowrap;
	}

	.wm-bai {
		left: 981px;
		top: 871px;
		font-size: 46px;
		font-weight: 700;
		line-height: 60px;
		letter-spacing: 3px;
	}

	.paw {
		position: absolute;
		left: 1060px;
		top: 850px;
		fill: rgba(255, 255, 255, 0.66);
	}

	.wm-du {
		left: 1076px;
		top: 890px;
		font-size: 26px;
		font-weight: 700;
		line-height: 30px;
		letter-spacing: 1px;
		color: #8a8a8a;
		text-shadow: none;
	}

	.wm-cn {
		left: 1129px;
		top: 874px;
		font-size: 38px;
		line-height: 56px;
		font-family: "Noto Sans CJK SC", sans-serif;
		font-weight: 700;
	}

	.wm-url {
		left: 982px;
		top: 923px;
		font-size: 27px;
		line-height: 38px;
	}
</style>
